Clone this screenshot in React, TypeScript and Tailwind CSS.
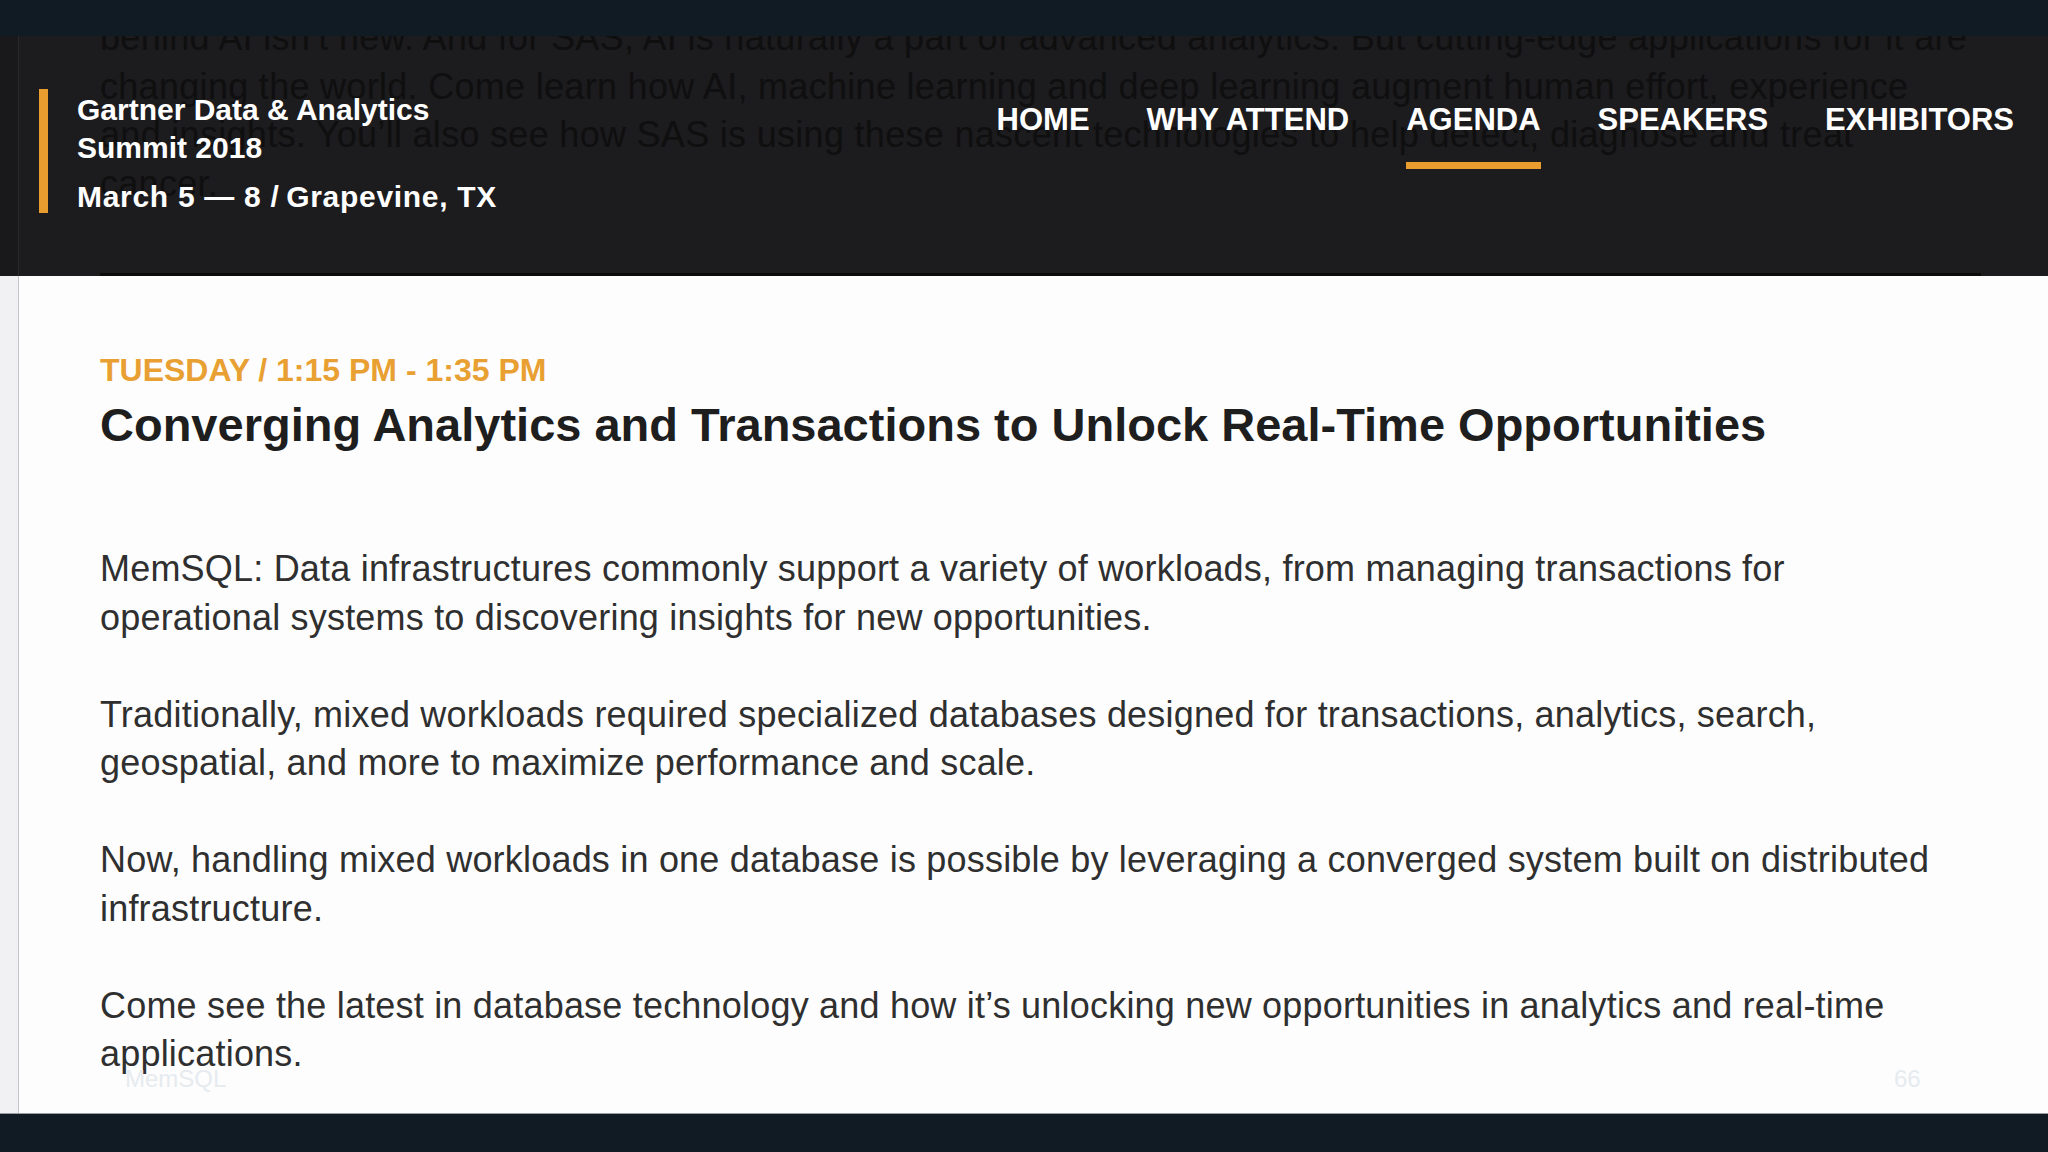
const navItems = ["HOME", "WHY ATTEND", "AGENDA", "SPEAKERS", "EXHIBITORS"];

const ghostLines = [
  "behind AI isn’t new. And for SAS, AI is naturally a part of advanced analytics. But cutting-edge applications for it are",
  "changing the world. Come learn how AI, machine learning and deep learning augment human effort, experience",
  "and insights. You’ll also see how SAS is using these nascent technologies to help detect, diagnose and treat",
  "cancer.",
];

const paragraphs = [
  "MemSQL: Data infrastructures commonly support a variety of workloads, from managing transactions for operational systems to discovering insights for new opportunities.",
  "Traditionally, mixed workloads required specialized databases designed for transactions, analytics, search, geospatial, and more to maximize performance and scale.",
  "Now, handling mixed workloads in one database is possible by leveraging a converged system built on distributed infrastructure.",
  "Come see the latest in database technology and how it’s unlocking new opportunities in analytics and real-time applications.",
];

export default function App() {
  return (
    <div className="flex h-[1152px] w-[2048px] flex-col overflow-hidden bg-[#111b24] font-['Liberation_Sans','Helvetica',Arial,sans-serif]">
      {/* top band */}
      <div className="h-[36px] shrink-0 bg-[#111b24]" />

      {/* header */}
      <header className="relative flex h-[240px] shrink-0 overflow-hidden bg-[#1c1b1d]">
        {/* faded previous slide text */}
        <div className="absolute left-[100px] top-[-22px] text-[36px] leading-[48.5px] tracking-[0.3px] text-[#0f0f10]">
          {ghostLines.map((line) => (
            <div key={line} className="whitespace-nowrap">
              {line}
            </div>
          ))}
        </div>

        <div className="relative w-[19px] shrink-0 border-r border-[#29292b] bg-[#19181a]" />

        <div className="relative flex flex-1 items-start justify-between pr-[34px] pt-[53px]">
          <div className="ml-[20px] flex">
            <div className="h-[124px] w-[9px] bg-[#e99d2e]" />
            <div className="ml-[29px] pt-[2px] text-[30px] font-bold text-white">
              <div className="leading-[38px]">Gartner Data &amp; Analytics</div>
              <div className="leading-[38px]">Summit 2018</div>
              <div className="mt-[11px] leading-[38px] tracking-[0.7px]">
                March 5 — 8 /&#8201;Grapevine, TX
              </div>
            </div>
          </div>

          <nav className="flex gap-[57px] pt-[16px]">
            {navItems.map((item) => (
              <div key={item} className="flex flex-col">
                <span className="text-[31px] font-bold leading-[30px] text-white">
                  {item}
                </span>
                {item === "AGENDA" && (
                  <div className="mt-[27px] h-[7px] w-full bg-[#e99d2e]" />
                )}
              </div>
            ))}
          </nav>
        </div>

        <div className="absolute bottom-0 left-[100px] h-[3px] w-[1881px] bg-[#0b0b0c]" />
      </header>

      {/* slide body */}
      <main className="flex h-[838px] shrink-0 border-b border-[#9a9ca0] bg-[#fdfdfd]">
        <div className="w-[19px] shrink-0 border-r border-[#c4c4c6] bg-[#f1f1f3]" />

        <div className="relative flex-1 pl-[81px] pt-[76px]">
          <div className="text-[32px] font-bold leading-[36px] text-[#e9a033]">
            TUESDAY / 1:15 PM - 1:35 PM
          </div>
          <h1 className="mt-[11px] text-[47px] font-bold leading-[52px] text-[#1e1e1e]">
            Converging Analytics and Transactions to Unlock Real-Time Opportunities
          </h1>

          <div className="mt-[94px] flex w-[1850px] flex-col gap-[48.5px] text-[36px] leading-[48.5px] tracking-[0.2px] text-[#2f2f2f]">
            {paragraphs.map((p) => (
              <p key={p}>{p}</p>
            ))}
          </div>

          <div className="absolute bottom-[20px] left-[106px] text-[24px] leading-[28px] text-[#e6ebf0]">
            MemSQL
          </div>
          <div className="absolute bottom-[20px] left-[1875px] text-[24px] leading-[28px] text-[#e6ebf0]">
            66
          </div>
        </div>
      </main>

      {/* bottom band */}
      <div className="flex-1 bg-[#111b24]" />
    </div>
  );
}
